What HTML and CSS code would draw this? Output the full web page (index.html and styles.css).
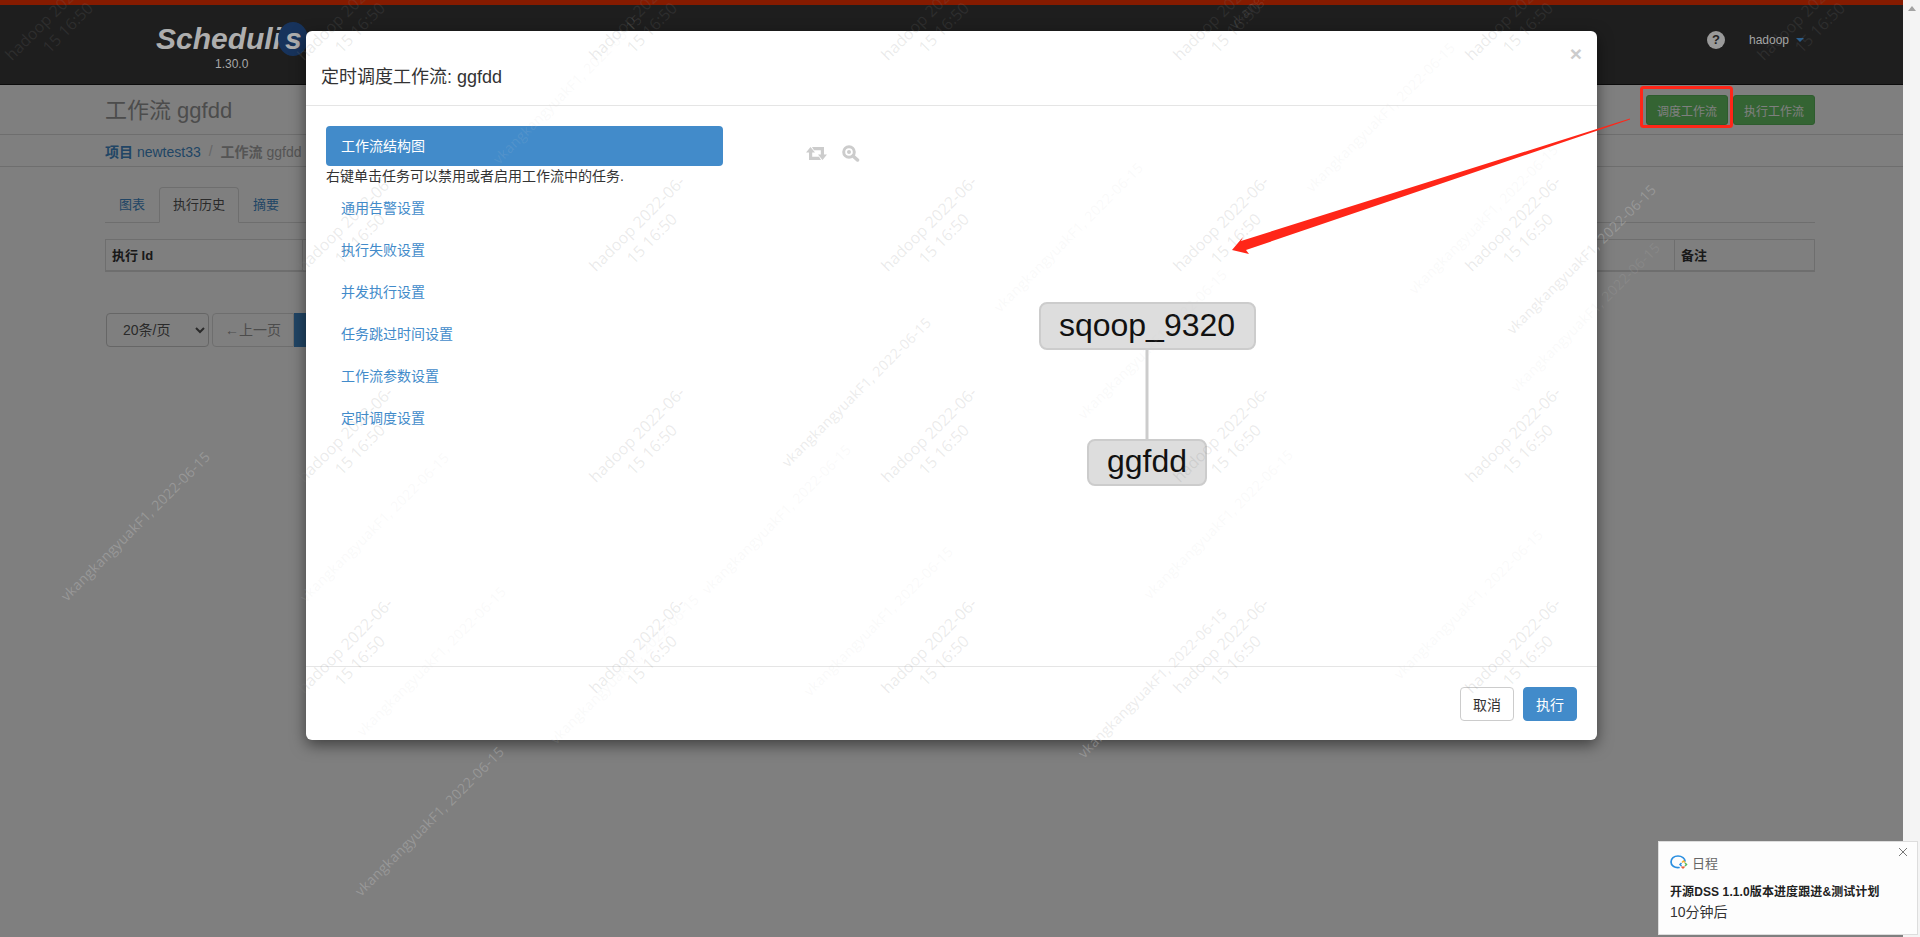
FILE: index.html
```html
<!DOCTYPE html>
<html lang="en">
<head>
  <meta charset="UTF-8">
  <meta name="viewport" content="width=device-width, initial-scale=1.0">
  <title>Schedulis</title>
  <link rel="stylesheet" href="styles.css">
</head>
<body>
  <div class="app">
    <div class="page">
      <header class="navbar">
        <div class="brand">
          <div class="logo">Scheduli<span class="logo-s">s</span></div>
          <div class="version">1.30.0</div>
        </div>
        <div class="user-nav">
          <span class="help-icon">?</span>
          <span class="user-name">hadoop</span>
          <span class="caret"></span>
        </div>
      </header>

      <div class="title-row">
        <h1>工作流 ggfdd</h1>
        <div class="title-actions">
          <button class="btn-success">调度工作流</button>
          <button class="btn-success">执行工作流</button>
        </div>
      </div>
      <div class="crumbs">
        <a href="#"><b>项目</b> newtest33</a>
        <span class="crumb-sep">/</span>
        <span class="crumb-cur"><b>工作流</b> ggfdd</span>
      </div>

      <div class="content">
        <ul class="tabs">
          <li><a href="#">图表</a></li>
          <li class="active"><a href="#">执行历史</a></li>
          <li><a href="#">摘要</a></li>
        </ul>
        <table class="history">
          <thead>
            <tr><th class="col-id">执行 Id</th><th></th><th class="col-note">备注</th></tr>
          </thead>
        </table>
        <div class="pager">
          <select class="page-size"><option>20条/页</option></select>
          <a class="page-prev" href="#">←上一页</a>
          <a class="page-cur" href="#">1</a>
        </div>
      </div>

      <div class="backdrop"></div>

      <div class="modal">
        <div class="modal-header">
          <h4>定时调度工作流: ggfdd</h4>
          <span class="modal-close">×</span>
        </div>
        <div class="modal-body">
          <div class="side-nav">
            <a class="side-item active" href="#">工作流结构图</a>
            <p class="side-help">右键单击任务可以禁用或者启用工作流中的任务.</p>
            <a class="side-item" href="#">通用告警设置</a>
            <a class="side-item" href="#">执行失败设置</a>
            <a class="side-item" href="#">并发执行设置</a>
            <a class="side-item" href="#">任务跳过时间设置</a>
            <a class="side-item" href="#">工作流参数设置</a>
            <a class="side-item" href="#">定时调度设置</a>
          </div>
          <div class="graph-panel">
            <div class="graph-tools">
              <svg class="tool-icon" width="21" height="13" viewBox="0 0 21 13">
                <path d="M0 5.500L4.500 0 9 5.500H6.200V9.800H13L15 13H3V5.500Z" fill="#ccc"/>
                <path d="M21 7.500L16.500 13 12 7.500H14.800V3.200H8L6 0H18V7.500Z" fill="#ccc"/>
              </svg>
              <svg class="tool-icon" width="18" height="17" viewBox="0 0 18 17">
                <circle cx="7" cy="7" r="5.300" fill="none" stroke="#ccc" stroke-width="3"/>
                <circle cx="7" cy="7" r="2" fill="#ccc"/>
                <path d="M11 11L15.500 15" stroke="#ccc" stroke-width="3.500" stroke-linecap="round"/>
              </svg>
            </div>
            <svg class="graph" width="1000" height="420" viewBox="0 0 1000 420">
              <line class="edge" x1="388" y1="243" x2="388" y2="334"/>
              <rect class="node" x="281" y="197" width="215" height="46" rx="7"/>
              <text class="node-label" x="388" y="230">sqoop_9320</text>
              <rect class="node" x="329" y="334" width="118" height="45" rx="7"/>
              <text class="node-label" x="388" y="366">ggfdd</text>
            </svg>
          </div>
        </div>
        <div class="modal-footer">
          <button class="btn-default">取消</button>
          <button class="btn-primary">执行</button>
        </div>
      </div>

      <div class="marks" id="marks"></div>

      <svg class="annotation" width="1903" height="937" viewBox="0 0 1903 937">
        <rect x="1641.500" y="87.500" width="90" height="39" rx="2" fill="none" stroke="#ff2618" stroke-width="3"/>
        <path d="M1630 118.500L1241 241 1243 237 1232 250 1249 254 1246 250 1630 119.500Z" fill="#ff2618"/>
      </svg>
    </div>

    <div class="scrollbar"><span class="scroll-up"></span></div>
  </div>

  <div class="notice">
    <div class="notice-head">
      <svg width="18" height="15" viewBox="0 0 18 15">
        <path d="M9 12.500C4.500 13 1 10.500 1 7S4 1 8 1s7 2.500 7 5" fill="none" stroke="#2b8fe0" stroke-width="1.700" stroke-linecap="round"/>
        <path d="M12 7.500l1.500-1.500 1.500 1.500" fill="none" stroke="#f2b233" stroke-width="1.500"/>
        <path d="M15 8l1.500 1.500L15 11" fill="none" stroke="#5cb85c" stroke-width="1.500"/>
        <path d="M14.500 11.500L13 13l-1.500-1.500" fill="none" stroke="#e8603c" stroke-width="1.500"/>
        <path d="M11.500 11l-1.500-1.500L11.500 8" fill="none" stroke="#2b8fe0" stroke-width="1.500"/>
      </svg>
      <span>日程</span>
      <svg class="notice-close" width="10" height="10" viewBox="0 0 10 10">
        <path d="M1 1l8 8M9 1L1 9" stroke="#777" stroke-width="1"/>
      </svg>
    </div>
    <div class="notice-title">开源DSS 1.1.0版本进度跟进&amp;测试计划</div>
    <div class="notice-time">10分钟后</div>
  </div>

  <script src="script.js"></script>
</body>
</html>
```

FILE: styles.css
```css
* {
  box-sizing: border-box;
  margin: 0;
  padding: 0;
}

body {
  width: 1920px;
  height: 937px;
  overflow: hidden;
  position: relative;
  font-family: "Liberation Sans", "Noto Sans CJK SC", sans-serif;
  font-size: 14px;
  color: #333;
  background-color: #fff;
}

a {
  color: #428bca;
  text-decoration: none;
}

.app {
  display: flex;
  height: 937px;
}

.page {
  flex: 1;
  position: relative;
  overflow: hidden;
  background-color: #fff;
}

.scrollbar {
  width: 17px;
  background-color: #f4f4f4;
  display: flex;
  justify-content: center;
  padding-top: 6px;
}

.scroll-up {
  width: 0;
  height: 0;
  border-left: 4px solid transparent;
  border-right: 4px solid transparent;
  border-bottom: 5px solid #a3a3a3;
}

/* header sits above the backdrop, the real page does the same */
.navbar {
  position: relative;
  z-index: 2;
  height: 85px;
  border-top: 5px solid #851b00;
  border-bottom: 1px solid #0c0c0c;
  background-color: #1e1e1e;
  display: flex;
  justify-content: space-between;
  padding: 0 88px 0 156px;
}

.brand {
  padding-top: 17px;
}

.logo {
  font-size: 30px;
  font-weight: bold;
  font-style: italic;
  line-height: 34px;
  color: #aeaeae;
}

.logo-s {
  display: inline-block;
  width: 30px;
  height: 34px;
  margin-left: -3px;
  padding-left: 7px;
  border-radius: 50%;
  background-color: #17335c;
}

.version {
  margin-top: 0;
  padding-left: 59px;
  font-size: 12px;
  line-height: 16px;
  color: #a8a8a8;
}

.user-nav {
  display: flex;
  align-items: center;
  height: 70px;
  margin-right: 11px;
}

.help-icon {
  width: 18px;
  height: 18px;
  margin-right: 24px;
  border-radius: 50%;
  background-color: #9a9a9a;
  color: #222;
  font-size: 13px;
  font-weight: bold;
  line-height: 18px;
  text-align: center;
}

.user-name {
  font-size: 12px;
  color: #a5a5a5;
}

.caret {
  width: 0;
  height: 0;
  margin-left: 7px;
  border-left: 4px solid transparent;
  border-right: 4px solid transparent;
  border-top: 4px solid #2a5f8f;
}

.title-row {
  height: 50px;
  display: flex;
  justify-content: space-between;
  align-items: flex-start;
  padding: 10px 88px 0 105px;
  border-bottom: 1px solid #ddd;
}

.title-row h1 {
  font-size: 22px;
  font-weight: normal;
  line-height: 32px;
  color: #999;
}

.title-actions {
  display: flex;
  gap: 5px;
}

.btn-success {
  width: 82px;
  height: 30px;
  border: 1px solid #5cb85c;
  border-radius: 3px;
  background-color: #68c866;
  color: #fff;
  font-family: inherit;
  font-size: 12px;
}

.crumbs {
  height: 32px;
  padding: 0 88px 0 105px;
  border-bottom: 1px solid #ddd;
  display: flex;
  align-items: center;
  gap: 8px;
  font-size: 14px;
}

.crumb-sep {
  color: #ccc;
}

.crumb-cur {
  color: #aaa;
}

.content {
  padding: 20px 88px 0 105px;
}

.tabs {
  list-style-type: none;
  display: flex;
  height: 36px;
  border-bottom: 1px solid #ddd;
  font-size: 13px;
}

.tabs li a {
  display: block;
  height: 36px;
  padding: 0 13px;
  line-height: 34px;
  border: 1px solid transparent;
  border-radius: 4px 4px 0 0;
}

.tabs li.active a {
  border-color: #ddd #ddd #fff;
  background-color: #fff;
  color: #555;
}

.history {
  width: 100%;
  margin-top: 16px;
  border-collapse: collapse;
  border: 1px solid #ddd;
  border-bottom: 2px solid #ddd;
  font-size: 13px;
}

.history th {
  height: 31px;
  padding: 0 6px;
  border-right: 1px solid #ddd;
  text-align: left;
}

.col-id {
  width: 197px;
}

.col-note {
  width: 140px;
}

.pager {
  display: flex;
  height: 34px;
  margin-top: 41px;
  margin-left: 1px;
}

.page-size {
  width: 103px;
  height: 34px;
  margin-right: 3px;
  padding-left: 12px;
  border: 1px solid #ccc;
  border-radius: 4px;
  background-color: #fff;
  color: #555;
  font-family: inherit;
  font-size: 14px;
}

.page-prev {
  width: 82px;
  line-height: 32px;
  border: 1px solid #ddd;
  border-radius: 4px 0 0 4px;
  color: #999;
  text-align: center;
}

.page-cur {
  width: 40px;
  line-height: 34px;
  background-color: #428bca;
  color: #fff;
  text-align: center;
}

.backdrop {
  position: absolute;
  inset: 0;
  z-index: 1;
  background-color: rgba(0, 0, 0, 0.5);
}

.modal {
  position: absolute;
  z-index: 3;
  top: 31px;
  left: 306px;
  width: 1291px;
  height: 709px;
  border-radius: 6px;
  background-color: #fff;
  box-shadow: 0 5px 15px rgba(0, 0, 0, 0.5);
  display: flex;
  flex-direction: column;
}

.modal-header {
  height: 75px;
  flex-shrink: 0;
  display: flex;
  justify-content: space-between;
  padding: 0 15px;
  border-bottom: 1px solid #e5e5e5;
}

.modal-header h4 {
  font-size: 18px;
  font-weight: normal;
  line-height: 92px;
  height: 74px;
}

.modal-close {
  font-size: 21px;
  font-weight: bold;
  line-height: 46px;
  color: #ccc;
}

.modal-body {
  flex: 1;
  display: flex;
  padding: 20px 0 0 20px;
}

.side-nav {
  width: 397px;
  flex-shrink: 0;
}

.side-item {
  display: block;
  height: 40px;
  margin-bottom: 2px;
  padding-left: 15px;
  line-height: 40px;
  border-radius: 4px;
}

.side-item.active {
  margin-bottom: 0;
  background-color: #428bca;
  color: #fff;
}

.side-help {
  height: 22px;
  line-height: 20px;
  color: #333;
}

.graph-panel {
  position: relative;
  flex: 1;
}

.graph-tools {
  display: flex;
  align-items: center;
  gap: 15px;
  padding: 19px 0 0 83px;
}

.graph {
  position: absolute;
  top: -20px;
  left: 36px;
}

.edge {
  stroke: #ccc;
  stroke-width: 3;
}

.node {
  fill: #ddd;
  stroke: #ccc;
  stroke-width: 2;
}

.node-label {
  font-family: "Liberation Sans", sans-serif;
  font-size: 32px;
  text-anchor: middle;
  fill: #111;
}

.modal-footer {
  height: 74px;
  flex-shrink: 0;
  display: flex;
  justify-content: flex-end;
  gap: 9px;
  padding: 20px 20px 0 0;
  border-top: 1px solid #e5e5e5;
}

.btn-default,
.btn-primary {
  width: 54px;
  height: 34px;
  border-radius: 4px;
  font-family: inherit;
  font-size: 14px;
}

.btn-default {
  border: 1px solid #ccc;
  background-color: #fff;
  color: #333;
}

.btn-primary {
  border: 1px solid #428bca;
  background-color: #428bca;
  color: #fff;
}

.marks {
  position: absolute;
  inset: 0;
  z-index: 4;
  pointer-events: none;
  overflow: hidden;
}

.mark-host,
.mark-user {
  position: absolute;
  transform: rotate(-45deg);
  transform-origin: 0 0;
  font-family: "Open Sans", sans-serif;
  white-space: nowrap;
}

.mark-host {
  width: 146px;
  font-size: 16px;
  line-height: 21px;
  text-align: center;
  color: rgba(128, 128, 128, 0.17);
}

.mark-user {
  font-size: 14px;
  line-height: 18px;
  letter-spacing: 0.3px;
  color: rgba(209, 209, 209, 0.12);
}

.mark-user.strong {
  color: rgba(200, 200, 200, 0.35);
}

.annotation {
  position: absolute;
  top: 0;
  left: 0;
  z-index: 5;
  pointer-events: none;
}

.notice {
  position: absolute;
  top: 841px;
  left: 1658px;
  z-index: 6;
  width: 260px;
  height: 94px;
  padding: 12px 12px 0 11px;
  border: 1px solid #ddd;
  background-color: #fdfdfd;
}

.notice-head {
  position: relative;
  display: flex;
  align-items: center;
  gap: 4px;
  height: 16px;
  color: #666;
  font-size: 13px;
}

.notice-close {
  position: absolute;
  top: -7px;
  right: -3px;
}

.notice-title {
  margin-top: 12px;
  font-size: 12px;
  font-weight: bold;
  line-height: 20px;
  letter-spacing: 0.1px;
  color: #222;
}

.notice-time {
  font-size: 14px;
  line-height: 20px;
  color: #333;
}
```

FILE: script.js
```js
const marks = document.getElementById('marks');

const userMarks = [
  [67, 602, true], [361, 897, true], [1513, 335, true], [1084, 759, true], [788, 468, true],
  [306, 603], [363, 737], [708, 595], [810, 697], [556, 745], [1312, 193], [1415, 295],
  [1000, 313], [1084, 420], [499, 165], [1517, 393], [1150, 600], [1400, 680], [1235, 30]
];

const addMark = (className, x, y, lines) => {
  const el = document.createElement('div');
  el.className = className;
  el.style.left = `${x}px`;
  el.style.top = `${y}px`;
  el.innerHTML = lines.join('<br>');
  marks.appendChild(el);
};

// hadoop tiles repeat every 292 x 211
for (let row = 0; row < 5; row++) {
  for (let col = 0; col < 7; col++) {
    addMark('mark-host', 5 + col * 292 - 11, 68 + row * 211 - 11, ['hadoop 2022-06-', '15 16:50']);
  }
}

userMarks.forEach(([x, y, strong]) => {
  addMark(strong ? 'mark-user strong' : 'mark-user', x - 10, y - 10, ['vkangkangyuakF1, 2022-06-15']);
});
```
